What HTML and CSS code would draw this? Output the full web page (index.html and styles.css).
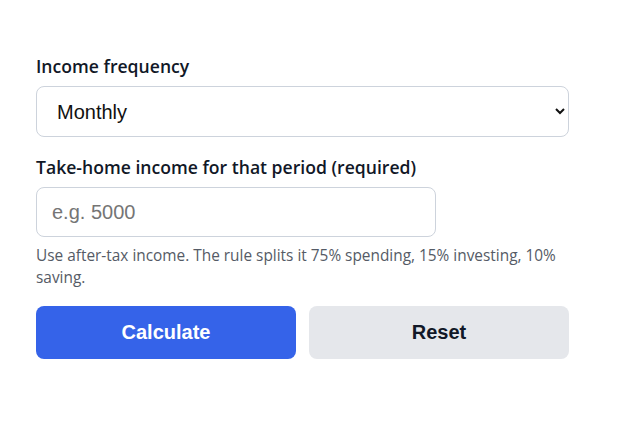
FILE: index.html
```html
<!DOCTYPE html>
<html lang="en">
<head>
<meta charset="utf-8">
<title>Income calculator</title>
<link rel="stylesheet" href="styles.css">
</head>
<body>
<form class="calc">
  <div class="field">
    <label class="label" for="freq">Income frequency</label>
    <select id="freq" class="control select">
      <option>Monthly</option>
      <option>Weekly</option>
      <option>Yearly</option>
    </select>
  </div>
  <div class="field">
    <label class="label" for="income">Take-home income for that period (required)</label>
    <input id="income" class="control input" type="text" placeholder="e.g. 5000">
    <p class="hint">Use after-tax income. The rule splits it 75% spending, 15% investing, 10% saving.</p>
  </div>
  <div class="actions">
    <button type="button" class="btn btn-primary">Calculate</button>
    <button type="reset" class="btn btn-secondary">Reset</button>
  </div>
</form>
</body>
</html>
```
FILE: styles.css
```css
html, body {
  margin: 0;
  background: #ffffff;
}
body {
  font-family: "Open Sans", "Noto Sans", sans-serif;
  color: #111827;
  padding: 52px 36px 0 36px;
}
.calc {
  width: 533px;
  display: flex;
  flex-direction: column;
}
.field {
  display: flex;
  flex-direction: column;
  margin-bottom: 16px;
}
.label {
  font-size: 17.6px;
  font-weight: 600;
  line-height: 28px;
  margin-bottom: 6px;
}
.control {
  box-sizing: border-box;
  font-family: "Liberation Sans", Arial, sans-serif;
  font-size: 20px;
  color: #111;
  border: 1px solid #cdd3dc;
  border-radius: 8px;
  background: #fff;
  height: 51px;
}
.select {
  width: 533px;
  padding: 0 10px 0 16px;
}
.input {
  width: 400px;
  height: 50px;
  padding: 0 15px;
}
.input::placeholder {
  color: #757575;
}
.hint {
  margin: 8px 0 0;
  font-size: 15.4px;
  line-height: 22px;
  color: #555b66;
}
.actions {
  display: flex;
  gap: 13px;
  margin-top: 1px;
}
.btn {
  flex: 1;
  height: 53px;
  border: none;
  border-radius: 8px;
  font-family: "Liberation Sans", Arial, sans-serif;
  font-size: 20px;
  font-weight: 700;
}
.btn-primary {
  background: #3563e9;
  color: #fff;
}
.btn-secondary {
  background: #e5e7eb;
  color: #111827;
}
```
